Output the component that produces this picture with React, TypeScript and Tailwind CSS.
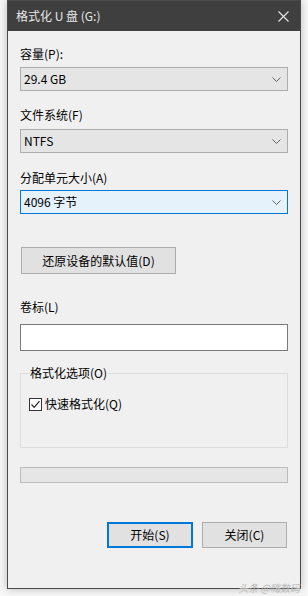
const font = { fontFamily: '"Microsoft YaHei UI", "Noto Sans CJK SC", "Noto Sans", sans-serif' };

function Chevron() {
  return (
    <svg width="9" height="5" viewBox="0 0 9 5" className="shrink-0">
      <path d="M0.5 0.5 L4.5 4.5 L8.5 0.5" fill="none" stroke="#606060" strokeWidth="1" />
    </svg>
  );
}

function Combo({ value, focused }: { value: string; focused?: boolean }) {
  return (
    <div
      className={`flex h-[24px] items-center justify-between border pl-[3px] pr-[6px] text-[12px] leading-[22px] text-black ${
        focused ? 'border-[#0078d7] bg-[#e5f1fb]' : 'border-[#adadad] bg-[#e5e5e5]'
      }`}
    >
      <span>{value}</span>
      <Chevron />
    </div>
  );
}

function Label({ text, className }: { text: string; className: string }) {
  return <div className={`h-[18px] text-[12px] leading-[18px] text-black ${className}`}>{text}</div>;
}

export default function App() {
  return (
    <div className="relative h-[596px] w-[308px] bg-[#f7f7f7] pl-[7px]" style={font}>
      <div className="flex h-[589px] w-[294px] flex-col border border-[#4a4a4a] bg-[#f0f0f0] shadow-[0_0_8px_rgba(0,0,0,0.25)]">
        {/* title bar */}
        <div className="flex h-[30px] shrink-0 items-center justify-between bg-[#3f3f3f] pl-[8px] pr-[11px]">
          <span className="text-[12px] leading-[16px] text-[#e8e8e8]">格式化 U 盘 (G:)</span>
          <svg width="11" height="11" viewBox="0 0 11 11">
            <path d="M0.5 0.5 L10.5 10.5 M10.5 0.5 L0.5 10.5" stroke="#e8e8e8" strokeWidth="1.1" />
          </svg>
        </div>

        <div className="flex flex-col px-[12px]">
          <Label text="容量(P):" className="mt-[14px]" />
          <div className="mt-[4px]">
            <Combo value="29.4 GB" />
          </div>

          <Label text="文件系统(F)" className="mt-[15px]" />
          <div className="mt-[5px]">
            <Combo value="NTFS" />
          </div>

          <Label text="分配单元大小(A)" className="mt-[16px]" />
          <div className="mt-[3px]">
            <Combo value="4096 字节" focused />
          </div>

          <button
            type="button"
            className="mt-[33px] ml-[1px] h-[27px] w-[155px] border border-[#adadad] bg-[#e1e1e1] text-[12px] leading-[25px] text-black"
          >
            还原设备的默认值(D)
          </button>

          <Label text="卷标(L)" className="mt-[24px]" />
          <div className="mt-[8px] h-[27px] border border-[#7a7a7a] bg-white" />

          {/* options group */}
          <div className="relative mt-[22px] h-[75px] border border-[#dcdcdc]">
            <span className="absolute left-[8px] top-[-10px] bg-[#f0f0f0] px-[1px] text-[12px] leading-[18px] text-black">
              格式化选项(O)
            </span>
            <div className="mt-[21px] ml-[8px] flex items-center gap-[3px]">
              <div className="flex h-[13px] w-[13px] items-center justify-center border border-[#333] bg-white">
                <svg width="11" height="11" viewBox="0 0 11 11">
                  <path d="M1.5 5.5 L4.2 8.3 L9.5 2.2" fill="none" stroke="#222" strokeWidth="1.2" />
                </svg>
              </div>
              <span className="text-[12px] leading-[18px] text-black">快速格式化(Q)</span>
            </div>
          </div>

          <div className="mt-[19px] h-[16px] border border-[#bcbcbc] bg-[#e6e6e6]" />

          <div className="mt-[39px] flex justify-end gap-[9px] pr-[1px]">
            <button
              type="button"
              className="h-[26px] w-[86px] border-2 border-[#0078d7] bg-[#e1e1e1] text-[12px] leading-[22px] text-black"
            >
              开始(S)
            </button>
            <button
              type="button"
              className="h-[26px] w-[85px] border border-[#adadad] bg-[#e1e1e1] text-[12px] leading-[24px] text-black"
            >
              关闭(C)
            </button>
          </div>
        </div>
      </div>
      <span className="absolute bottom-[2px] right-[8px] text-[10px] italic leading-[12px] text-[#b8b8b8]">
        头条 @嗨数码
      </span>
    </div>
  );
}
